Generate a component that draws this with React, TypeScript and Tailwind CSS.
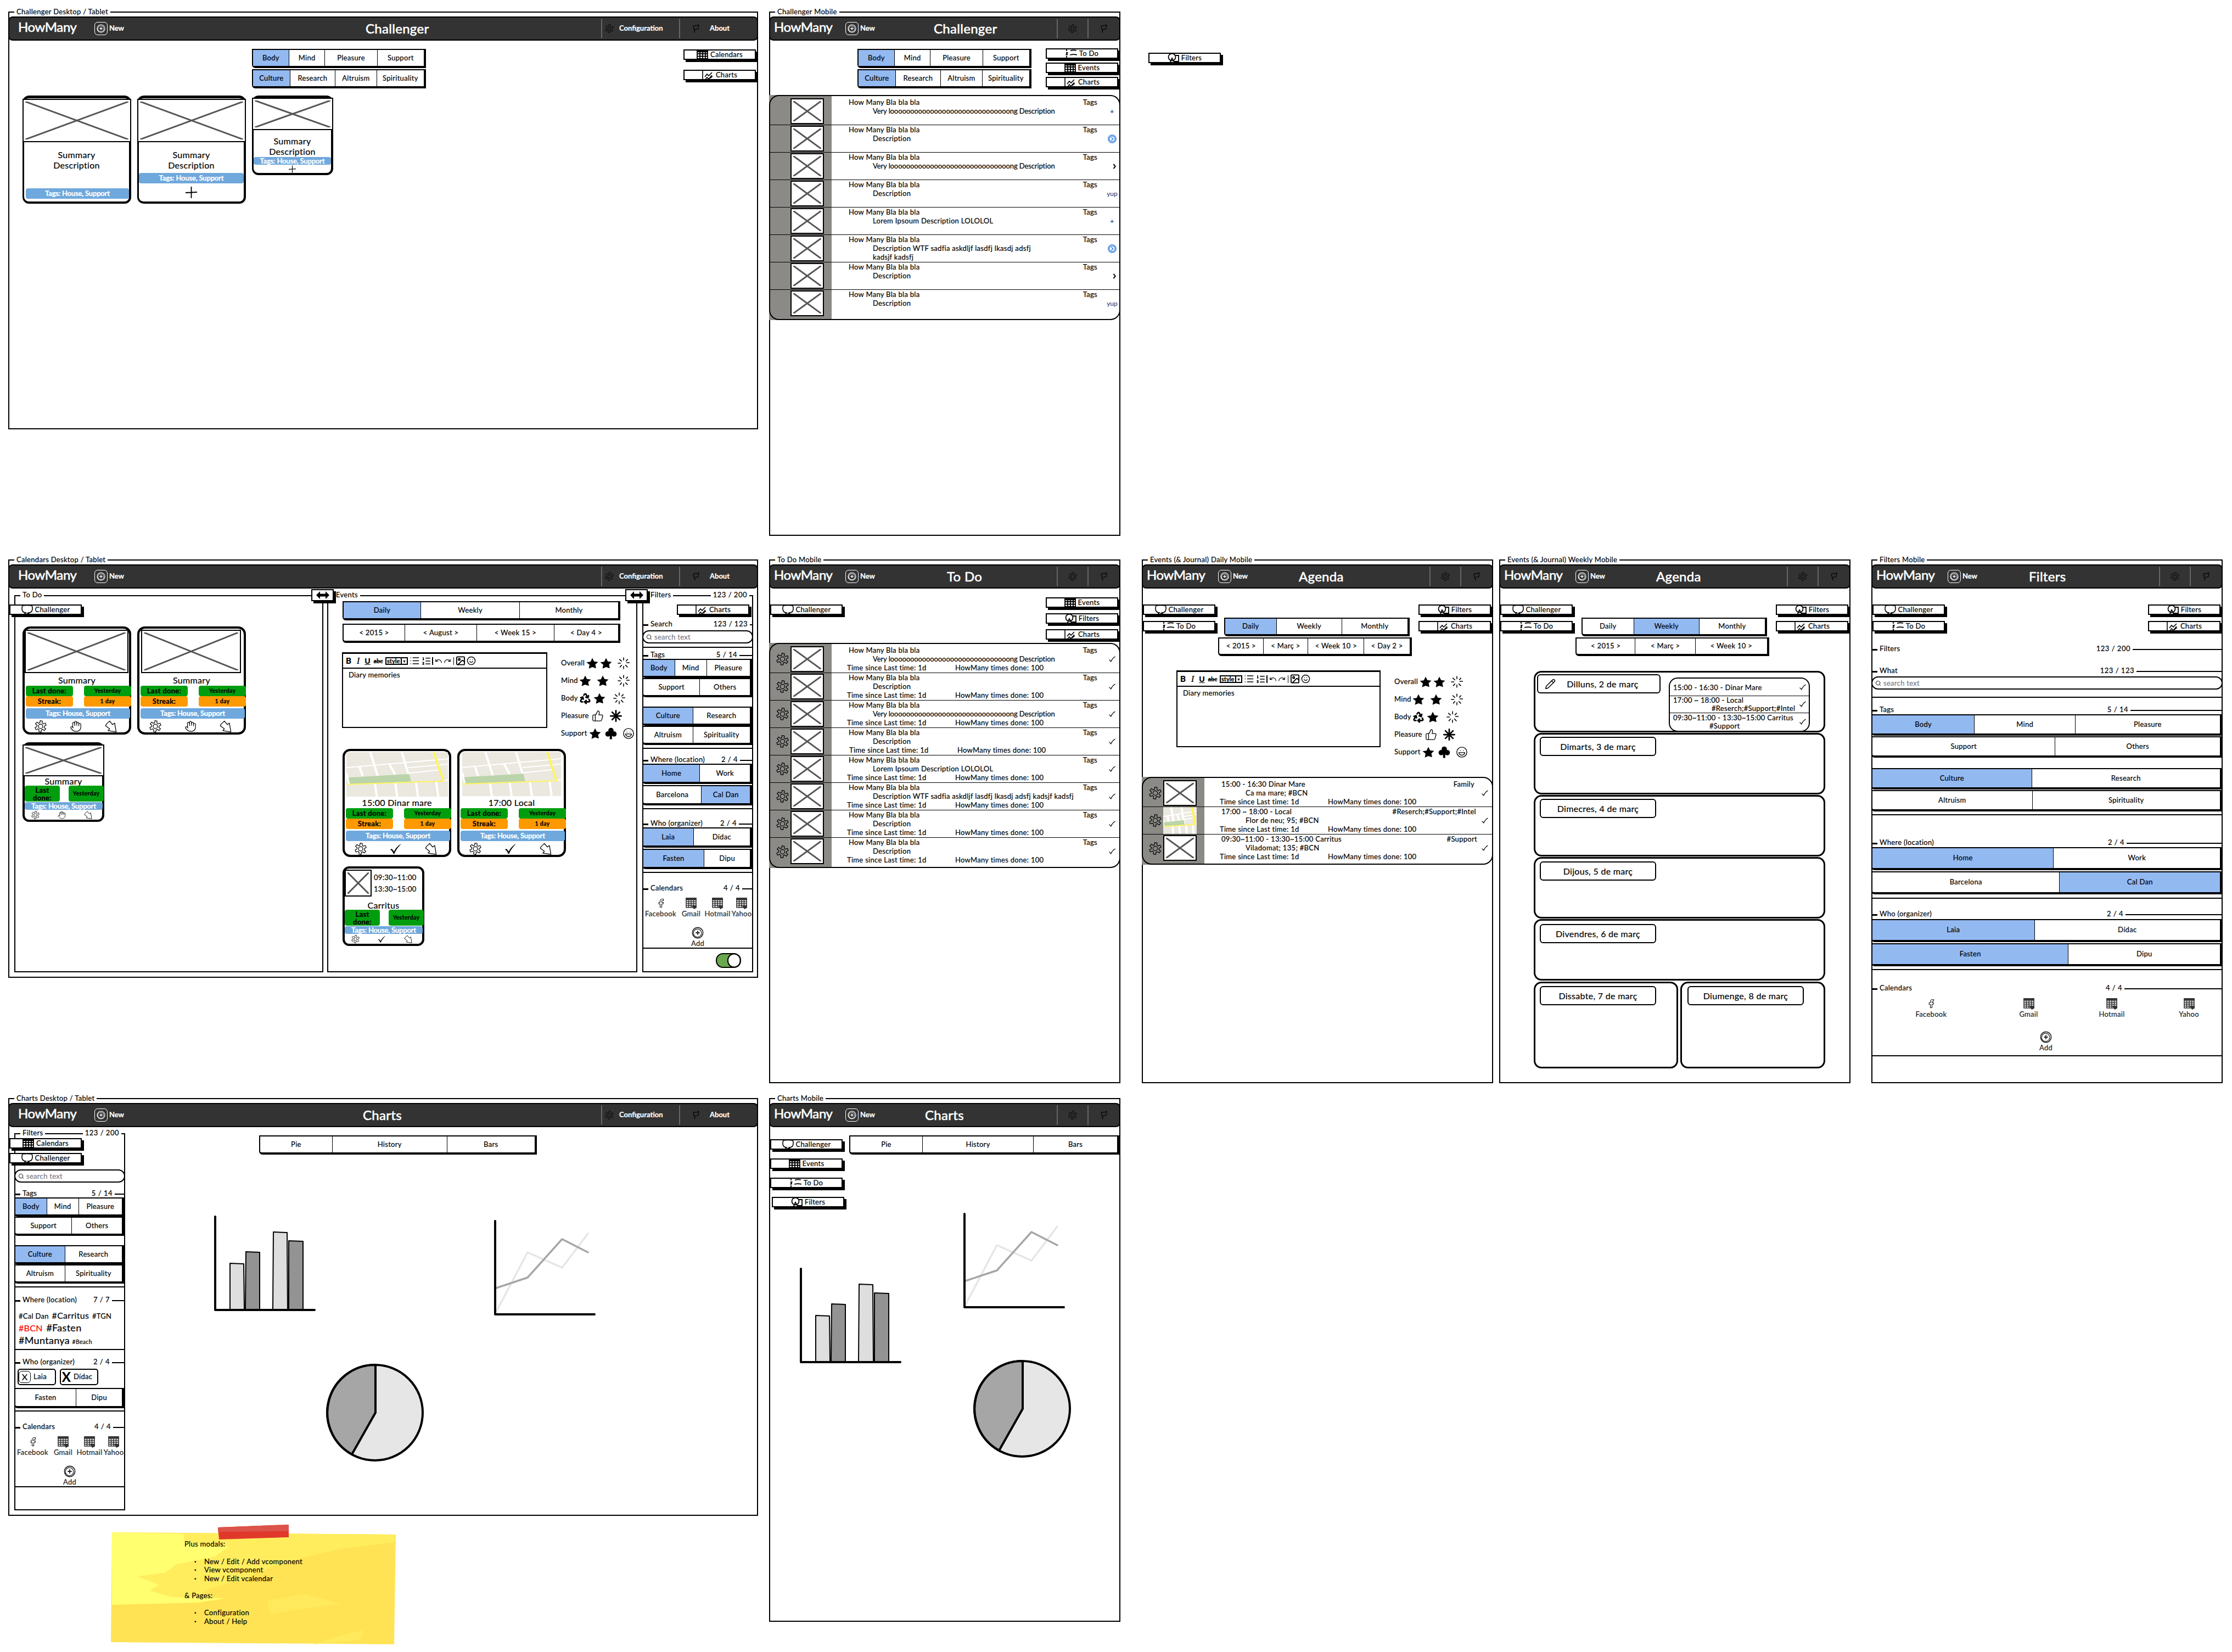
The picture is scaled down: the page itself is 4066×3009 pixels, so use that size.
import React from 'react';
import {
  Search, Hand, ThumbsUp, Recycle, Laugh, Pencil, List, ListOrdered,
  Undo, Redo, Image as ImageIcon, Smile, Facebook,
} from 'lucide-react';

type Kids = { children?: React.ReactNode; className?: string };

/* ---------- icons ---------- */

const gearPath = (() => {
  const pts: string[] = [];
  const teeth = 6;
  for (let i = 0; i < teeth; i++) {
    const a = (i / teeth) * Math.PI * 2 - 1.45;
    [[-0.34, 7.2], [-0.2, 11.4], [0.2, 11.2], [0.3, 7.6]].forEach(([d, r]) =>
      pts.push(`${(12 + Math.cos(a + d) * r).toFixed(1)} ${(12 + Math.sin(a + d) * r).toFixed(1)}`)
    );
  }
  return 'M' + pts.join('L') + 'Z';
})();

const Gear = ({ className = '' }) => (
  <svg viewBox="0 0 24 24" className={className} fill="none" stroke="#000" strokeWidth="1.300" strokeLinejoin="round">
    <path d={gearPath} />
    <circle cx="12" cy="12" r="4.300" />
  </svg>
);
const Flag = ({ className = '' }) => (
  <svg viewBox="0 0 12 16" className={className} fill="none" stroke="#000" strokeWidth="1.2" strokeLinecap="round" strokeLinejoin="round">
    <path d="M4 15L1 4C3 1 5 4 7 3S9 1 11 1.5C10 4 10.500 6 10 8.500C8 8 6 10.500 3 9.500" />
  </svg>
);
const Check = ({ className = '' }) => (
  <svg viewBox="0 0 24 24" className={className} fill="#000">
    <path d="M1 13.500L4 12L8.500 17.500C12 11 17 5 23 2C17 8 12 15 9 22L7.500 22C6 18 4 15 1 13.500Z" />
  </svg>
);
const ThinCheck = () => (
  <svg viewBox="0 0 14 14" className="h-[12px] w-[14px]" fill="none" stroke="#000" strokeWidth="1.500" strokeLinecap="round">
    <path d="M1 8L4.500 11.500C6.500 7 9.500 3.500 13 1.500" />
  </svg>
);
const FatArrow = ({ className = '' }) => (
  <svg viewBox="0 0 24 24" className={className} fill="none" stroke="#000" strokeWidth="1.400" strokeLinejoin="round">
    <path d="M9.500 1.500L15.500 8.500L19.500 5.500L22.500 23L6.500 20.500L9.500 17L1.500 11L3 7.500Z" />
  </svg>
);
const Star = ({ className = '' }) => (
  <svg viewBox="0 0 24 24" className={className} fill="#000">
    <path d="M12 1.500L15.500 8.500L23.500 9.500L18 14.500L19.500 22L12 19.500L5 22.500L6.500 15L.500 10L8.500 9Z" />
  </svg>
);
const ClubIcon = ({ className = '' }) => (
  <svg viewBox="0 0 24 24" className={className} fill="#000">
    <circle cx="12" cy="6" r="5.300" />
    <circle cx="6" cy="13" r="5.300" />
    <circle cx="18" cy="13" r="5.300" />
    <path d="M10 8H14V23.500H9.500Z" />
  </svg>
);
const Burst = ({ className = '' }) => (
  <svg viewBox="0 0 24 24" className={className} stroke="#000" strokeWidth="1.700" strokeLinecap="round">
    <path d="M12 1V6M12 18V23M1 12H6M18 11H23.500M4 4.500L8 8M17 7.500L20 4.500M8 16L5 19.500M16 16L19.500 19.500" />
  </svg>
);
const Asterisk8 = ({ className = '' }) => (
  <svg viewBox="0 0 24 24" className={className} stroke="#000" strokeWidth="3" strokeLinecap="round">
    <path d="M12 1.500V22.500M1.500 12H22.500M4.500 4.500L19.500 19.500M19.500 4.500L4.500 19.500" />
  </svg>
);
const CalGrid = ({ className = '', color = '#000' }) => (
  <svg viewBox="0 0 20 20" className={className} fill="none" stroke={color} strokeWidth="1.600">
    <path d="M1 1H19V18H1Z M1 7.500H19M1 11H19M1 14.500H19M5.500 5V18M10 5V18M14.500 5V18" />
    <path d="M1 1H19V4H1Z" fill={color} />
    <path d="M12 15H19V18L15.500 20Z" fill={color} />
  </svg>
);
const CirclePlus = ({ className = '', color = '#fff' }) => (
  <svg viewBox="0 0 24 24" className={className} fill="none" stroke={color} strokeWidth="1.800">
    <circle cx="12" cy="12" r="10.500" />
    <circle cx="11.500" cy="12.500" r="8" strokeWidth="1.300" />
    <path d="M12 8V16M8 12H16" strokeWidth="2" />
  </svg>
);
const Plus = ({ className = '' }) => (
  <svg viewBox="0 0 20 20" className={className} stroke="#000" strokeWidth="1.800" strokeLinecap="round">
    <path d="M10 .500V19.500M.500 10.500L19.500 9.500" />
  </svg>
);

type NavKind = 'cal' | 'chart' | 'todo' | 'filter' | 'chat';
const NavIcon = ({ kind }: { kind: NavKind }) => {
  const base = 'h-6 w-[21px] shrink-0';
  if (kind === 'cal')
    return (
      <svg viewBox="0 0 21 24" className={base} stroke="#000" strokeWidth="1.800" fill="none">
        <path d="M1 5H20V23H1Z M1 10H20M1 14.500H20M1 19H20M6 6V23M11 6V23M16 6V23" />
        <path d="M1 5H20V6.500H1Z" fill="#000" />
      </svg>
    );
  if (kind === 'chart')
    return (
      <svg viewBox="0 0 21 24" className={base} stroke="#000" strokeWidth="1.600" fill="none">
        <path d="M1 0V24M5 15L9 10L12 13L18 7M5 21L9 16L12 19L18 12M14 18L19 14" />
      </svg>
    );
  if (kind === 'todo')
    return (
      <svg viewBox="0 0 21 24" className={base} stroke="#000" strokeWidth="1.800" fill="none">
        <path d="M2 3V7M1 10H3.500L1.500 13.500H4M2 16V20M9 6.500Q14 4.500 20 6M8 14Q14 12.500 21 13.800" />
      </svg>
    );
  if (kind === 'filter')
    return (
      <svg viewBox="0 0 21 24" className={base} stroke="#000" strokeWidth="1.800" fill="none">
        <path d="M13 7H20V18H11" />
        <circle cx="8" cy="10" r="6.500" fill="#fff" />
        <path d="M3 23L8 12L12 19" />
      </svg>
    );
  return (
    <svg viewBox="0 0 21 24" className={base} stroke="#000" strokeWidth="1.600" fill="none">
      <path d="M2 4Q0 10 2 14Q4 17 8 17L4 21M19 4Q21.500 10 18.500 15Q15 17.500 12.500 17L15 21M2 4Q10 3 19 4M8 21Q11 16 15 21" />
    </svg>
  );
};

/* ---------- shared widgets ---------- */

const Nav = ({ kind, label, className = '' }: { kind: NavKind; label: string; className?: string }) => (
  <div className={`mb-1 mr-1 h-[19px] w-[132px] shrink-0 border-2 border-black bg-white shadow-[4px_4px_0_#000] ${className}`}>
    <div className="flex h-full items-center justify-center gap-1 overflow-hidden">
      <NavIcon kind={kind} />
      <span className="whitespace-nowrap leading-[15px]">{label}</span>
    </div>
  </div>
);

type Seg = [string, number, boolean?];
const SegBar = ({ items, className = '' }: { items: Seg[]; className?: string }) => (
  <div className={`relative z-10 flex shrink-0 rounded-bl-md border-b-[4px] border-l-2 border-r-[4px] border-t-2 border-black bg-white ${className}`}>
    {items.map(([label, w, on], i) => (
      <div
        key={label}
        className={`flex min-w-0 items-center justify-center whitespace-nowrap ${i ? 'border-l-[1.5px] border-black' : ''} ${on ? 'bg-[#93b9f1]' : ''}`}
        style={{ flex: `${w} 1 0px` }}
      >
        {label}
      </div>
    ))}
  </div>
);

const Cross = ({ className = '' }) => (
  <div className={`shrink-0 border-[2px] border-black bg-white p-[3px] ${className}`}>
    <svg viewBox="0 0 100 100" preserveAspectRatio="none" className="block h-full w-full" stroke="#555" strokeWidth="3" strokeLinecap="round">
      <path d="M0 0L100 100M100 0L0 100" vectorEffect="non-scaling-stroke" />
    </svg>
  </div>
);

const MapPic = ({ className = '' }) => (
  <svg viewBox="0 0 100 100" preserveAspectRatio="none" className={`block shrink-0 bg-[#ebe8df] ${className}`} fill="none">
    <g stroke="#fff" strokeWidth="4">
      <path vectorEffect="non-scaling-stroke" d="M23.500 0L31 54M54.500 0L63 64M13 33L16 54M42 26L48 50M0 47L3 72M28 70L30 100M48 68L50 100M68.500 68L70.500 100M88.500 67L90.500 100" />
      <path vectorEffect="non-scaling-stroke" strokeWidth="2" d="M0 35L100 15M61 35L100 27M62 47L91 40M96 65L100 62" />
    </g>
    <path d="M2 57L62 49L64 66L3.500 72Z" fill="#bbd4ab" />
    <g stroke="#fdf55c">
      <path vectorEffect="non-scaling-stroke" strokeWidth="2" d="M0 72.500L96 65" />
      <path vectorEffect="non-scaling-stroke" strokeWidth="4" d="M86 0L95.500 65" />
    </g>
  </svg>
);

const Brand = ({ cell }: { cell: string }) => (
  <>
    <span className={`${cell} -mt-[7px] shrink-0 text-[24px] leading-none tracking-[-0.4px] [-webkit-text-stroke:0.6px]`}>HowMany</span>
    <span className="flex h-6 w-6 shrink-0 items-center justify-center rounded-[6px] border-[1.5px] border-white">
      <CirclePlus className="h-[16px] w-[16px]" />
    </span>
    <span className="ml-[3px] w-[34px] shrink-0 font-bold tracking-[-0.1px]">New</span>
  </>
);
const Sep = () => <span className="h-[36px] w-[2px] shrink-0 rounded bg-[#666]" />;

const BarTitle = ({ children, className = '' }: Kids) => (
  <span className={`${className} text-[24px] leading-none [-webkit-text-stroke:0.6px]`}>{children}</span>
);

const DesktopBar = ({ title, titleClass }: { title: string; titleClass: string }) => (
  <div className="relative z-10 -mx-[3px] mt-[6px] flex h-11 shrink-0 items-center rounded-[8px] border-2 border-black bg-[#333] pl-4 text-white">
    <Brand cell="w-[139px]" />
    <BarTitle className={titleClass}>{title}</BarTitle>
    <div className="ml-auto flex w-[284px] items-center tracking-normal">
      <Sep />
      <Gear className="ml-[5px] h-4 w-4" />
      <span className="ml-[10px] w-[109px] font-bold">Configuration</span>
      <Sep />
      <Flag className="ml-[23px] h-4 w-3" />
      <span className="ml-[19px] font-bold">About</span>
    </div>
  </div>
);
const MobileBar = ({ title, titleClass }: { title: string; titleClass: string }) => (
  <div className="relative z-10 -mx-[3px] mt-[6px] flex h-11 shrink-0 items-center rounded-[8px] border-2 border-black bg-[#333] pl-[7px] text-white">
    <Brand cell="w-[130px]" />
    <BarTitle className={titleClass}>{title}</BarTitle>
    <div className="ml-auto flex w-[114px] items-center">
      <Sep />
      <Gear className="ml-[19px] mr-[19px] h-4 w-4" />
      <Sep />
      <Flag className="ml-[22px] h-4 w-3" />
    </div>
  </div>
);

const Frame = ({ title, className = '', children }: Kids & { title: string }) => (
  <section className={`relative flex shrink-0 flex-col border-2 border-black bg-white p-px ${className}`}>
    <h2 className="absolute -top-[10px] left-[9px] whitespace-nowrap bg-white px-[4px] leading-4">{title}</h2>
    {children}
  </section>
);

const Panel = ({ title, titleClass = 'left-[9px]', count, className = '', children }: Kids & { title: string; titleClass?: string; count?: string }) => (
  <div className={`relative flex h-[687px] shrink-0 flex-col border-2 border-black p-px ${className}`}>
    <span className={`absolute -top-[11px] whitespace-nowrap bg-white px-1 leading-4 ${titleClass}`}>{title}</span>
    {count && <span className="absolute -top-[11px] right-[5px] bg-white px-1 leading-4 tracking-[0.5px]">{count}</span>}
    {children}
  </div>
);

const Legend = ({ label, count, tail, className = '' }: { label: string; count: string; tail: number; className?: string }) => (
  <div className={`-mx-[2px] flex h-4 shrink-0 items-center whitespace-nowrap leading-4 ${className}`}>
    <span className="mt-[4px] h-[3px] w-[10px] bg-black" />
    <span className="ml-1">{label}</span>
    <span className="ml-auto mr-1 tracking-[0.5px]">{count}</span>
    <span className="mt-[4px] h-[2px] bg-black" style={{ width: tail }} />
  </div>
);
const Rule = ({ className = '' }) => <div className={`-mx-[3px] h-[2px] shrink-0 bg-black ${className}`} />;

const SearchBox = ({ className = '' }) => (
  <div className={`-mx-[3px] flex h-6 shrink-0 items-center rounded-full border-2 border-black bg-white pl-[5px] text-[#7a7a85] ${className}`}>
    <Search className="h-[11px] w-[11px] text-black" strokeWidth={2} />
    <span className="ml-[4px] leading-none">search text</span>
  </div>
);

const CalAccounts = ({ widths, addClass, className = '' }: { widths: string[]; addClass: string; className?: string }) => (
  <div className={`shrink-0 text-[#222] ${className}`}>
    <div className="flex">
      {['Facebook', 'Gmail', 'Hotmail', 'Yahoo'].map((n, i) => (
        <div key={n} className={`flex shrink-0 flex-col items-center ${widths[i]}`}>
          {i === 0 ? <Facebook className="h-[22px] w-[18px]" strokeWidth={1.6} /> : <CalGrid className="h-[22px] w-[20px]" color="#333" />}
          <span className="leading-4">{n}</span>
        </div>
      ))}
    </div>
    <div className={`flex w-[40px] flex-col items-center ${addClass}`}>
      <CirclePlus className="h-[22px] w-[22px]" color="#222" />
      <span className="leading-4">Add</span>
    </div>
  </div>
);

/* ---------- cards ---------- */

const Tag = ({ className = '' }) => (
  <div className={`flex shrink-0 items-center justify-center whitespace-nowrap rounded-[4px] bg-[#6fa8dc] font-bold leading-none tracking-[-0.2px] text-white ${className}`}>
    Tags: House, Support
  </div>
);

const ChallengeCard = ({ small, plus }: { small?: boolean; plus?: boolean }) => (
  <div className={`flex shrink-0 flex-col rounded-[12px] border-b-[4px] border-l-[3px] border-r-[4px] border-t-[5px] border-black bg-white ${small ? 'h-[145px] w-[148px]' : 'h-[197px] w-[198px]'}`}>
    <Cross className={small ? '-ml-[3px] -mr-1 -mt-[1px] h-[59px]' : '-ml-[3px] -mr-1 mt-[1px] h-[79px]'} />
    <div className={`text-center text-[16px] ${small ? 'mt-[10px] leading-[19px]' : 'mt-[13px] leading-[19px]'}`}>
      Summary
      <br />
      Description
    </div>
    {small ? (
      <Tag className="mt-[1px] h-[14px]" />
    ) : (
      <Tag className={plus ? 'mt-[5px] h-[19px]' : 'ml-[3px] mt-[33px] h-[19px]'} />
    )}
    {plus && <Plus className={small ? 'mx-auto mt-[1px] h-[14px] w-[13px]' : 'mx-auto mt-[6px] h-[21px] w-[21px]'} />}
  </div>
);

const Pill = ({ className = '', children }: Kids) => (
  <div className={`flex shrink-0 items-center justify-center rounded-[4px] text-center font-bold text-black ${className}`}>{children}</div>
);

const CardActions = ({ small, done }: { small?: boolean; done?: boolean }) => {
  const s = small ? 'h-[15px] w-[15px] shrink-0' : 'h-[22px] w-[22px] shrink-0';
  return (
    <div className={`flex ${small ? 'mt-[2px] gap-[33px] pl-[12px]' : 'mt-[3px] gap-[42px] pl-[18px]'}`}>
      <Gear className={s} />
      {done ? <Check className={s} /> : <Hand className={s} strokeWidth={1.3} />}
      <FatArrow className={s} />
    </div>
  );
};

const TaskCard = ({ title, picture, done }: { title: string; picture: React.ReactNode; done?: boolean }) => (
  <div className="h-[197px] w-[198px] shrink-0 rounded-[14px] border-[4px] border-black bg-white">
    <div className="mt-[2px] h-[80px]">{picture}</div>
    <div className="h-[22px] text-center text-[16px] leading-[24px]">{title}</div>
    <div className="ml-[2px] grid w-[192px] grid-cols-[86px_86px] justify-between leading-none">
      <Pill className="h-[19px] bg-[#009e0f]">Last done:</Pill>
      <Pill className="h-[19px] bg-[#009e0f] text-[10.5px]">Yesterday</Pill>
      <Pill className="h-[19px] bg-[#ff9900]">Streak:</Pill>
      <Pill className="h-[19px] bg-[#ff9900] text-[10.5px]">1 day</Pill>
    </div>
    <Tag className="ml-[2px] mt-[3px] h-[19px] w-[190px]" />
    <CardActions done={done} />
  </div>
);

const SmallTaskCard = ({ top, title, done }: { top: React.ReactNode; title: string; done?: boolean }) => (
  <div className="h-[145px] w-[149px] shrink-0 rounded-[12px] border-[4px] border-black bg-white">
    {top}
    <div className="h-[17px] text-center text-[16px] leading-[18px]">{title}</div>
    <div className="flex w-[144px] justify-between">
      <Pill className="h-[29px] w-[64px] bg-[#009e0f] leading-[14px]">
        Last
        <br />
        done:
      </Pill>
      <Pill className="h-[29px] w-[64px] bg-[#009e0f] text-[10.5px]">Yesterday</Pill>
    </div>
    <Tag className="mt-[1px] h-[14px] w-[142px]" />
    <CardActions small done={done} />
  </div>
);

/* ---------- editor & ratings ---------- */

const Editor = ({ className = '' }) => (
  <div className={`flex shrink-0 flex-col border-2 border-black bg-white ${className}`}>
    <div className="flex h-[28px] shrink-0 items-center border-b-2 border-t border-black pl-[5px] tracking-normal">
      <span className="w-[14px] text-[15px] font-black leading-none">B</span>
      <span className="w-[17px] text-center font-['Liberation_Serif'] text-[17px] italic leading-none">I</span>
      <span className="w-[17px] text-center text-[14px] font-black leading-none underline">U</span>
      <span className="w-[22px] text-center text-[11px] font-bold leading-none line-through">abc</span>
      <span className="ml-[2px] flex h-[14px] w-[41px] items-center border-2 border-black pl-[1px] text-[11px] font-bold leading-none">
        style
        <span className="ml-auto h-full w-[11px] border-l-2 border-black text-center text-[7px] leading-[10px]">▼</span>
      </span>
      <List className="ml-[3px] h-[19px] w-[19px]" strokeWidth={2} />
      <ListOrdered className="ml-[2px] h-[18px] w-[19px]" strokeWidth={2} />
      <span className="ml-[1px] h-[14px] w-[2px] bg-black" />
      <Undo className="ml-[3px] h-[14px] w-[14px]" strokeWidth={2} />
      <Redo className="ml-[2px] h-[14px] w-[14px]" strokeWidth={2} />
      <span className="ml-[4px] h-[14px] w-[1px] bg-black" />
      <ImageIcon className="ml-[2px] h-[19px] w-[20px]" strokeWidth={2.4} />
      <Smile className="ml-[1px] h-[17px] w-[17px]" strokeWidth={2} />
    </div>
    <div className="pl-[10px] pt-[3px] leading-4">Diary memories</div>
  </div>
);

const ic = 'h-[22px] w-[22px] shrink-0';
const Ratings = ({ className = '' }) => (
  <div className={`flex shrink-0 flex-col ${className}`}>
    <div className="flex h-8 items-center">
      <span className="w-[46px]">Overall</span>
      <Star className={ic} />
      <Star className={`${ic} ml-[3px]`} />
      <Burst className={`${ic} ml-[10px]`} />
    </div>
    <div className="flex h-8 items-center">
      <span className="w-[33px]">Mind</span>
      <Star className={ic} />
      <Star className={`${ic} ml-[10px]`} />
      <Burst className={`${ic} ml-[16px]`} />
    </div>
    <div className="flex h-8 items-center">
      <span className="w-[33px]">Body</span>
      <Recycle className={ic} strokeWidth={3} />
      <Star className={`${ic} ml-[4px]`} />
      <Burst className={`${ic} ml-[14px]`} />
    </div>
    <div className="flex h-8 items-center">
      <span className="w-[56px]">Pleasure</span>
      <ThumbsUp className={ic} strokeWidth={1.4} />
      <Asterisk8 className={`${ic} ml-[11px]`} />
    </div>
    <div className="flex h-8 items-center">
      <span className="w-[51px]">Support</span>
      <Star className={ic} />
      <ClubIcon className={`${ic} ml-[7px]`} />
      <Laugh className={`${ic} ml-[10px]`} strokeWidth={1.5} />
    </div>
  </div>
);

/* ---------- lists ---------- */

type Row = {
  title: string;
  lines: string[];
  tight?: boolean;
  tag?: string;
  tagClass?: string;
  action?: 'plus' | 'circle' | 'chevron' | 'yup';
  map?: boolean;
  shift?: boolean;
};

const ActionMark = ({ action }: { action?: Row['action'] }) => {
  if (action === 'plus') return <span className="text-[12px] font-bold text-[#2f4f8f]">+</span>;
  if (action === 'yup') return <span className="text-[12px] tracking-normal text-[#2f4f8f]">yup</span>;
  if (action === 'circle')
    return (
      <svg viewBox="0 0 16 16" className="h-4 w-4" fill="none" stroke="#2a78dc" strokeWidth="1.300">
        <circle cx="8" cy="8" r="7.200" />
        <circle cx="8" cy="8" r="5.200" />
        <path d="M6.500 5L9.500 8L6.500 11" strokeWidth="1.600" />
      </svg>
    );
  if (action === 'chevron')
    return (
      <svg viewBox="0 0 8 12" className="ml-[8px] h-[10px] w-[7px]" fill="none" stroke="#000" strokeWidth="2.400">
        <path d="M1.500 1L5.500 6L1.500 11" />
      </svg>
    );
  return <ThinCheck />;
};

const TaskList = ({ rows, stats, className = '' }: { rows: Row[]; stats?: boolean; className?: string }) => (
  <div className={`relative -mx-[3px] shrink-0 ${className}`}>
    <div className="absolute inset-y-0 left-0 w-[114px] bg-[#8b8a87]" />
    <div className="relative rounded-[18px] border-2 border-black py-[3px]">
      {rows.map((r, i) => (
        <div key={i} className={`flex h-[50px] border-black ${i < rows.length - 1 ? 'border-b-[1.5px]' : ''}`}>
          <div className="flex w-[37px] shrink-0 items-center pl-[11px]">{stats && <Gear className="h-[23px] w-[23px]" />}</div>
          {r.map ? <MapPic className="h-[49px] w-[61px]" /> : <Cross className="mt-[1px] h-[47px] w-[61px]" />}
          <div className="ml-[42px] w-[470px] shrink-0 whitespace-nowrap leading-4">
            <div className={`flex justify-between pl-[3px] ${r.tagClass ?? 'pr-[14px]'}`}>
              <span>{r.title}</span>
              <span>{r.tag ?? 'Tags'}</span>
            </div>
            {r.lines.map((l) => (
              <div key={l} className={`pl-[47px] ${r.tight ? 'tracking-[-0.1px]' : ''}`}>{l}</div>
            ))}
            {stats && (
              <div className={`flex ${r.shift ? 'pl-1' : ''}`}>
                <span className="w-[197px]">Time since Last time: 1d</span>
                <span>HowMany times done: 100</span>
              </div>
            )}
          </div>
          <div className="flex w-[26px] shrink-0 items-center justify-center">
            <ActionMark action={r.action} />
          </div>
        </div>
      ))}
    </div>
  </div>
);

const LONG = 'Very loooooooooooooooooooooooooooooong Description';
const BLA = 'How Many Bla bla bla';
const challengeRows: Row[] = [
  { title: BLA, lines: [LONG], tight: true, action: 'plus' },
  { title: BLA, lines: ['Description'], action: 'circle' },
  { title: BLA, lines: [LONG], tight: true, action: 'chevron' },
  { title: BLA, lines: ['Description'], action: 'yup' },
  { title: BLA, lines: ['Lorem Ipsoum Description LOLOLOL'], action: 'plus' },
  { title: BLA, lines: ['Description WTF sadfia askdljf lasdfj lkasdj adsfj', 'kadsjf kadsfj'], action: 'circle' },
  { title: BLA, lines: ['Description'], action: 'chevron' },
  { title: BLA, lines: ['Description'], action: 'yup' },
];
const todoRows: Row[] = [
  { title: BLA, lines: [LONG], tight: true },
  { title: BLA, lines: ['Description'] },
  { title: BLA, lines: [LONG], tight: true },
  { title: BLA, lines: ['Description'], shift: true },
  { title: BLA, lines: ['Lorem Ipsoum Description LOLOLOL'] },
  { title: BLA, lines: ['Description WTF sadfia askdljf lasdfj lkasdj adsfj kadsjf kadsfj'] },
  { title: BLA, lines: ['Description'] },
  { title: BLA, lines: ['Description'] },
];
const agendaRows: Row[] = [
  { title: '15:00 - 16:30 Dinar Mare', lines: ['Ca ma mare; #BCN'], tag: 'Family', tagClass: 'pr-[6px]' },
  { title: '17:00 ~ 18:00 - Local', lines: ['Flor de neu; 95; #BCN'], tag: '#Reserch;#Support;#Intel', tagClass: 'pr-[3px]', map: true },
  { title: '09:30~11:00 - 13:30~15:00 Carritus', lines: ['Viladomat; 135; #BCN'], tag: '#Support', tagClass: 'pr-[1px]' },
];

/* ---------- charts ---------- */

const BarChart = ({ className = '' }) => (
  <svg viewBox="0 0 188 176" className={`h-[176px] w-[188px] shrink-0 ${className}`} stroke="#000" strokeWidth="2" strokeLinejoin="round">
    <path d="M30 172V88L55 89L56 172Z" fill="#dedede" />
    <path d="M58 172L59 67L84 68L84 172Z" fill="#939393" />
    <path d="M108 172L109 31L134 32L135 172Z" fill="#dedede" />
    <path d="M137 172V47L163 48L163 172Z" fill="#939393" />
    <path d="M3 3V173H184" fill="none" strokeWidth="4" strokeLinecap="round" />
  </svg>
);
const LineChart = ({ className = '' }) => (
  <svg viewBox="0 0 188 176" className={`h-[176px] w-[188px] shrink-0 ${className}`} fill="none" strokeLinecap="round" strokeLinejoin="round" strokeWidth="3.500">
    <path d="M5 168L62 60L125 88L172 26" stroke="#e6e6e6" />
    <path d="M5 125L62 106L125 36L172 60" stroke="#a6a6a6" />
    <path d="M3 3V173H184" stroke="#000" strokeWidth="4" />
  </svg>
);
const PieChart = ({ className = '' }) => (
  <svg viewBox="0 0 180 180" className={`h-[180px] w-[180px] shrink-0 ${className}`} stroke="#000" strokeWidth="4" strokeLinejoin="round">
    <circle cx="89" cy="90" r="87" fill="#e6e6e6" />
    <path d="M90 90V3A87 87 0 0 0 47 166Z" fill="#a6a6a6" />
  </svg>
);

/* ---------- filter groups ---------- */

const TagBars = ({ wide }: { wide?: boolean }) => {
  const h = wide ? 'h-[39px] -ml-[3px] -mr-[2px]' : 'h-[35px] -ml-[3px] -mr-[1px]';
  return (
    <>
      <SegBar className={`${h} ${wide ? 'mt-[1px]' : ''}`} items={wide ? [['Body', 186, true], ['Mind', 183], ['Pleasure', 264]] : [['Body', 58, true], ['Mind', 58], ['Pleasure', 80]]} />
      <SegBar className={`${h} ${wide ? 'mt-[1px]' : ''}`} items={wide ? [['Support', 333], ['Others', 300]] : [['Support', 104], ['Others', 92]]} />
      <SegBar className={`${h} ${wide ? 'mt-[19px]' : 'mt-[17px]'}`} items={wide ? [['Culture', 290, true], ['Research', 343]] : [['Culture', 91, true], ['Research', 105]]} />
      <SegBar className={`${h} ${wide ? 'mt-[1px]' : ''}`} items={wide ? [['Altruism', 291], ['Spirituality', 342]] : [['Altruism', 91], ['Spirituality', 105]]} />
      <Rule className="mt-[5px]" />
    </>
  );
};

const ArrowToggle = () => (
  <div className="absolute -right-[21px] -top-[13px] z-20 flex h-[22px] w-[41px] items-center justify-center border-2 border-black bg-white shadow-[4px_4px_0_#000]">
    <svg viewBox="0 0 24 14" className="h-[14px] w-[24px]" fill="#000">
      <path d="M0 7L7 0V4.500H17V0L24 7L17 14V9.500H7V14Z" />
    </svg>
  </div>
);

const topTags1: Seg[] = [['Body', 66, true], ['Mind', 66], ['Pleasure', 96], ['Support', 86]];
const topTags2: Seg[] = [['Culture', 68, true], ['Research', 83], ['Altruism', 76], ['Spirituality', 87]];

const Day = ({ label, pencil, className = '', boxClass = 'ml-[8px] mt-[4px] w-[212px]', children }: Kids & { label: string; pencil?: boolean; boxClass?: string }) => (
  <div className={`flex shrink-0 items-start rounded-[14px] border-[3px] border-black bg-white ${className}`}>
    <div className={`flex h-[35px] shrink-0 items-center justify-center rounded-[6px] border-2 border-black text-[16px] leading-none ${boxClass}`}>
      {pencil && <Pencil className="mr-5 h-[20px] w-[20px]" strokeWidth={1.8} />}
      <span className={pencil ? 'mr-[26px]' : ''}>{label}</span>
    </div>
    {children}
  </div>
);

const Note = () => (
  <div className="relative ml-[187px] mt-[30px] h-[204px] w-[519px] shrink-0">
    <svg viewBox="0 0 519 204" className="absolute inset-0 h-full w-full">
      <path d="M2 0L260 2L519 4L516 204L0 200Z" fill="#ffe354" />
      <path d="M2 0L519 4L517 18L420 30L350 46L300 60L240 85L180 103L140 128L2 132Z" fill="#ffed5e" />
      <path d="M2 0L132 3L134 18L215 26L190 44L120 58L98 74L48 80L88 96L70 106L110 118L210 120L160 128L2 132Z" fill="#ffff70" />
      <path d="M285 125L350 112L420 130L340 140L290 150ZM410 190L460 178L455 196L370 204Z" fill="#ffe95c" />
    </svg>
    <svg viewBox="0 0 130 28" className="absolute -top-[15px] left-[195px] h-7 w-[130px]">
      <path d="M0 6L129 1V24L2 28Z" fill="#e1382c" />
      <path d="M0 6L129 1V13L0 14Z" fill="#dc5349" />
    </svg>
    <div className="relative pl-[134px] pt-[14px] leading-[15.65px]">
      <p>Plus modals:</p>
      <ul className="mt-4">
        {['New / Edit / Add vcomponent', 'View vcomponent', 'New / Edit vcalendar'].map((t) => (
          <li key={t} className="flex">
            <span className="w-[36px] pl-[18px] font-bold">·</span>
            {t}
          </li>
        ))}
      </ul>
      <p className="mt-[15px]">&amp; Pages:</p>
      <ul className="mt-4">
        {['Configuration', 'About / Help'].map((t) => (
          <li key={t} className="flex">
            <span className="w-[36px] pl-[18px] font-bold">·</span>
            {t}
          </li>
        ))}
      </ul>
    </div>
  </div>
);

/* ---------- frames ---------- */

const ChallengerDesktop = () => (
  <Frame title="Challenger Desktop / Tablet" className="h-[761px] w-[1366px]">
    <DesktopBar title="Challenger" titleClass="ml-[433px]" />
    <div className="flex justify-between">
      <div className="ml-[441px] mt-[15px] flex w-[317px] flex-col gap-[2px]">
        <SegBar className="h-[35px]" items={topTags1} />
        <SegBar className="h-[35px]" items={topTags2} />
      </div>
      <div className="-mr-[3px] mt-[16px] flex flex-col gap-[14px]">
        <Nav kind="cal" label="Calendars" />
        <Nav kind="chart" label="Charts" />
      </div>
    </div>
    <div className="ml-[23px] mt-[13px] flex items-start gap-[11px]">
      <ChallengeCard />
      <ChallengeCard plus />
      <ChallengeCard small plus />
    </div>
  </Frame>
);

const ChallengerMobile = () => (
  <Frame title="Challenger Mobile" className="ml-5 h-[955px] w-[640px]">
    <MobileBar title="Challenger" titleClass="ml-[100px]" />
    <div className="flex justify-between">
      <div className="ml-[158px] mt-[15px] flex w-[317px] flex-col gap-[2px]">
        <SegBar className="h-[35px]" items={topTags1} />
        <SegBar className="h-[35px]" items={topTags2} />
      </div>
      <div className="-mr-[3px] mt-[14px] flex flex-col gap-[3px]">
        <Nav kind="todo" label="To Do" />
        <Nav kind="cal" label="Events" />
        <Nav kind="chart" label="Charts" />
      </div>
    </div>
    <TaskList className="mt-[10px]" rows={challengeRows} />
  </Frame>
);

const CalendarsDesktop = () => (
  <Frame title="Calendars Desktop / Tablet" className="h-[762px] w-[1366px]">
    <DesktopBar title="" titleClass="" />
    <div className="ml-[8px] mt-[12px] flex">
      <Panel title="To Do" className="w-[563px]">
        <ArrowToggle />
        <Nav kind="chat" label="Challenger" className="relative -ml-[12px] mt-[14px]" />
        <div className="ml-[12px] mt-[17px] flex gap-[11px]">
          <TaskCard title="Summary" picture={<Cross className="h-[79px] w-[189px]" />} />
          <TaskCard title="Summary" picture={<Cross className="ml-[3px] h-[79px] w-[182px]" />} />
        </div>
        <div className="ml-[12px] mt-[14px]">
          <SmallTaskCard title="Summary" top={<Cross className="-mx-1 h-[58px]" />} />
        </div>
      </Panel>
      <Panel title="Events" titleClass="left-[10px]" className="ml-[7px] w-[565px]">
        <ArrowToggle />
        <div className="ml-[25px] w-[506px]">
          <SegBar className="mt-[8px] h-[35px]" items={[['Daily', 141, true], ['Weekly', 180], ['Monthly', 180]]} />
          <SegBar className="mt-[6px] h-[35px]" items={[['< 2015 >', 112], ['< August >', 131], ['< Week 15 >', 141], ['< Day 4 >', 117]]} />
        </div>
        <div className="ml-[24px] mt-[17px] flex h-[164px] items-start">
          <Editor className="h-[138px] w-[374px]" />
          <Ratings className="ml-[25px] mt-[4px]" />
        </div>
        <div className="ml-[25px] mt-[12px] flex gap-[11px]">
          <TaskCard done title="15:00 Dinar mare" picture={<MapPic className="ml-[3px] h-[81px] w-[185px]" />} />
          <TaskCard done title="17:00 Local" picture={<MapPic className="ml-[5px] h-[80px] w-[180px]" />} />
        </div>
        <div className="ml-[25px] mt-[17px]">
          <SmallTaskCard
            done
            title="Carritus"
            top={
              <div className="flex h-[58px] items-start pt-[2px]">
                <Cross className="h-[49px] w-[49px]" />
                <div className="ml-[4px] pt-[4px] leading-[21px]">
                  09:30~11:00
                  <br />
                  13:30~15:00
                </div>
              </div>
            }
          />
        </div>
      </Panel>
      <Panel title="Filters" count="123 / 200" className="ml-[9px] w-[202px]">
        <Nav kind="chart" label="Charts" className="relative -mr-[8px] ml-auto mt-[14px]" />
        <Legend label="Search" count="123 / 123" tail={5} className="mt-[4px]" />
        <SearchBox className="mt-[4px]" />
        <Rule className="mt-[6px]" />
        <Legend label="Tags" count="5 / 14" tail={24} className="mt-[4px]" />
        <TagBars />
        <Legend label="Where (location)" count="2 / 4" tail={23} className="mt-[11px]" />
        <SegBar className="-ml-[3px] -mr-[1px] h-[37px]" items={[['Home', 104, true], ['Work', 92]]} />
        <SegBar className="-ml-[3px] -mr-[1px] mt-[2px] h-[37px]" items={[['Barcelona', 107], ['Cal Dan', 89, true]]} />
        <Rule className="mt-[5px]" />
        <Legend label="Who (organizer)" count="2 / 4" tail={25} className="mt-[17px]" />
        <SegBar className="-ml-[3px] -mr-[1px] h-[37px]" items={[['Laia', 92, true], ['Dídac', 104]]} />
        <SegBar className="-ml-[3px] -mr-[1px] mt-[2px] h-[37px]" items={[['Fasten', 112, true], ['Dipu', 84]]} />
        <Rule className="mt-[5px]" />
        <Legend label="Calendars" count="4 / 4" tail={19} className="mt-[19px]" />
        <CalAccounts className="mt-[9px]" widths={['w-[61px]', 'w-[50px]', 'w-[46px]', 'w-[42px]']} addClass="ml-[78px] mt-4" />
        <Rule />
        <svg viewBox="0 0 46 27" className="ml-[131px] mt-[8px] h-[27px] w-[46px] shrink-0" stroke="#000" strokeWidth="2">
          <rect x="1" y="1" width="44" height="25" rx="12" fill="#6aa84f" />
          <rect x="22" y="1.500" width="22.500" height="24" rx="11" fill="#fff" />
        </svg>
      </Panel>
    </div>
  </Frame>
);

const TodoMobile = () => (
  <Frame title="To Do Mobile" className="ml-5 h-[954px] w-[640px]">
    <MobileBar title="To Do" titleClass="ml-[124px]" />
    <div className="flex justify-between">
      <Nav kind="chat" label="Challenger" className="-ml-[1px] mt-[29px]" />
      <div className="-mr-[3px] mt-[16px] flex flex-col gap-[6px]">
        <Nav kind="cal" label="Events" />
        <Nav kind="filter" label="Filters" />
        <Nav kind="chart" label="Charts" />
      </div>
    </div>
    <TaskList stats className="mt-[2px]" rows={todoRows} />
  </Frame>
);

const SideNavs = ({ children }: Kids) => (
  <div className="flex justify-between">
    <div className="-ml-[1px] mt-[29px] flex w-[134px] flex-col gap-[7px]">
      <Nav kind="chat" label="Challenger" />
      <Nav kind="todo" label="To Do" />
    </div>
    {children}
    <div className="-mr-[3px] mt-[29px] flex w-[136px] flex-col gap-[7px]">
      <Nav kind="filter" label="Filters" />
      <Nav kind="chart" label="Charts" />
    </div>
  </div>
);

const DailyMobile = () => (
  <Frame title="Events (& Journal) Daily Mobile" className="ml-[39px] h-[954px] w-[640px]">
    <MobileBar title="Agenda" titleClass="ml-[86px]" />
    <SideNavs>
      <div className="mr-[9px] mt-[53px] flex w-[353px] flex-col gap-[2px]">
        <SegBar className="ml-[11px] h-[34px] w-[338px]" items={[['Daily', 94, true], ['Weekly', 120], ['Monthly', 121]]} />
        <SegBar className="h-[34px]" items={[['< 2015 >', 81], ['< Març >', 82], ['< Week 10 >', 103], ['< Day 2 >', 84]]} />
      </div>
    </SideNavs>
    <div className="ml-[60px] mt-[26px] flex h-[165px] items-start">
      <Editor className="h-[140px] w-[372px]" />
      <Ratings className="ml-[25px] mt-[5px]" />
    </div>
    <TaskList stats className="mt-[29px]" rows={agendaRows} />
  </Frame>
);

const WeeklyMobile = () => (
  <Frame title="Events (& Journal) Weekly Mobile" className="ml-[11px] h-[954px] w-[640px]">
    <MobileBar title="Agenda" titleClass="ml-[86px]" />
    <SideNavs>
      <div className="mr-[9px] mt-[53px] flex w-[353px] flex-col gap-[2px]">
        <SegBar className="ml-[11px] h-[34px] w-[338px]" items={[['Daily', 94], ['Weekly', 120, true], ['Monthly', 121]]} />
        <SegBar className="h-[34px]" items={[['< 2015 >', 108], ['< Març >', 110], ['< Week 10 >', 132]]} />
      </div>
    </SideNavs>
    <div className="ml-[60px] mt-[27px] flex w-[531px] flex-col gap-[1px]">
      <Day label="Dilluns, 2 de març" pencil boxClass="ml-[3px] mt-[3px] w-[225px]" className="h-[112px]">
        <div className="ml-[15px] mt-[9px] h-[99px] w-[257px] rounded-[16px] border-2 border-black leading-4">
          <div className="flex h-[32px] items-center justify-between border-b-[1.5px] border-black pl-[6px] pr-[4px]">
            15:00 - 16:30 - Dinar Mare
            <ThinCheck />
          </div>
          <div className="flex h-[31px] items-center justify-between whitespace-nowrap border-b-[1.5px] border-black pl-[6px] pr-[4px] leading-[15px]">
            <div>
              17:00 ~ 18:00 - Local
              <div className="pl-[70px]">#Reserch;#Support;#Intel</div>
            </div>
            <ThinCheck />
          </div>
          <div className="flex h-[31px] items-center justify-between whitespace-nowrap pl-[6px] pr-[4px] leading-[15px]">
            <div>
              09:30~11:00 - 13:30~15:00 Carritus
              <div className="pl-[66px]">#Support</div>
            </div>
            <ThinCheck />
          </div>
        </div>
      </Day>
      <Day label="Dimarts, 3 de març" className="h-[112px]" />
      <Day label="Dimecres, 4 de març" className="h-[112px]" />
      <Day label="Dijous, 5 de març" className="h-[112px]" boxClass="ml-[8px] mt-[5px] w-[212px]" />
      <Day label="Divendres, 6 de març" className="h-[112px]" boxClass="ml-[8px] mt-[6px] w-[212px]" />
      <div className="mt-[1px] flex justify-between">
        <Day label="Dissabte, 7 de març" className="h-[158px] w-[263px]" boxClass="ml-[8px] mt-[5px] w-[212px]" />
        <Day label="Diumenge, 8 de març" className="h-[158px] w-[264px]" boxClass="ml-[10px] mt-[5px] w-[212px]" />
      </div>
    </div>
  </Frame>
);

const FiltersMobile = () => (
  <Frame title="Filters Mobile" className="ml-[38px] h-[954px] w-[640px]">
    <MobileBar title="Filters" titleClass="ml-[87px]" />
    <SideNavs />
    <Legend label="Filters" count="123 / 200" tail={163} className="mt-[19px]" />
    <Legend label="What" count="123 / 123" tail={156} className="mt-[24px]" />
    <SearchBox className="mt-[3px]" />
    <Rule className="mt-[13px]" />
    <Legend label="Tags" count="5 / 14" tail={167} className="mt-[13px]" />
    <TagBars wide />
    <Legend label="Where (location)" count="2 / 4" tail={174} className="mt-[41px]" />
    <SegBar className="-ml-[3px] -mr-[2px] mt-[1px] h-[42px]" items={[['Home', 330, true], ['Work', 303]]} />
    <SegBar className="-ml-[3px] -mr-[2px] mt-[2px] h-[42px]" items={[['Barcelona', 341], ['Cal Dan', 292, true]]} />
    <Rule className="mt-[6px]" />
    <Legend label="Who (organizer)" count="2 / 4" tail={176} className="mt-[19px]" />
    <SegBar className="-ml-[3px] -mr-[2px] mt-[2px] h-[42px]" items={[['Laia', 295, true], ['Dídac', 338]]} />
    <SegBar className="-ml-[3px] -mr-[2px] mt-[2px] h-[42px]" items={[['Fasten', 357, true], ['Dipu', 276]]} />
    <Rule className="mt-[5px]" />
    <Legend label="Calendars" count="4 / 4" tail={178} className="mt-[24px]" />
    <CalAccounts className="mt-[10px]" widths={['w-[212px]', 'w-[143px]', 'w-[160px]', 'w-[121px]']} addClass="ml-[295px] mt-[23px]" />
    <Rule className="mt-[6px]" />
  </Frame>
);

const ChartsDesktop = () => (
  <Frame title="Charts Desktop / Tablet" className="h-[761px] w-[1366px]">
    <DesktopBar title="Charts" titleClass="ml-[428px]" />
    <div className="flex">
      <Panel title="Filters" count="123 / 200" className="ml-[8px] mt-[11px] w-[202px]">
        <Nav kind="cal" label="Calendars" className="relative -ml-[12px] mt-[6px]" />
        <Nav kind="chat" label="Challenger" className="relative -ml-[12px] mt-[4px]" />
        <SearchBox className="mt-[7px]" />
        <Legend label="Tags" count="5 / 14" tail={18} className="mt-[11px]" />
        <TagBars />
        <Legend label="Where (location)" count="7 / 7" tail={23} className="mt-[14px]" />
        <div className="mt-[9px] h-[73px] whitespace-nowrap pl-[5px] leading-[23px]">
          <div className="h-[23px]">
            #Cal Dan <span className="ml-[2px] text-[16px]">#Carritus</span> <span className="ml-[2px]">#TGN</span>
          </div>
          <div className="h-[23px]">
            <span className="text-[16px] text-[#f00]">#BCN</span> <span className="ml-[3px] text-[18px]">#Fasten</span>
          </div>
          <div className="h-[23px]">
            <span className="text-[18px]">#Muntanya</span> <span className="ml-[1px] text-[10.5px]">#Beach</span>
          </div>
        </div>
        <Rule />
        <Legend label="Who (organizer)" count="2 / 4" tail={23} className="mt-[13px]" />
        <div className="ml-[3px] mt-[5px] flex gap-[7px]">
          <div className="flex h-[30px] w-[70px] items-center rounded-[5px] border-2 border-black">
            <span className="flex h-[22px] w-[22px] items-center justify-center rounded-[6px] border border-black text-[16px] leading-none">X</span>
            <span className="ml-[5px]">Laia</span>
          </div>
          <div className="flex h-[30px] w-[70px] items-center rounded-[5px] border-2 border-black">
            <span className="flex h-[22px] w-[20px] items-center justify-center text-[24px] font-bold leading-none">X</span>
            <span className="ml-[3px]">Dídac</span>
          </div>
        </div>
        <SegBar className="-ml-[3px] -mr-[1px] mt-[5px] h-[37px]" items={[['Fasten', 112], ['Dipu', 84]]} />
        <Rule className="mt-[4px]" />
        <Legend label="Calendars" count="4 / 4" tail={21} className="mt-[19px]" />
        <CalAccounts className="mt-[9px]" widths={['w-[61px]', 'w-[50px]', 'w-[46px]', 'w-[42px]']} addClass="ml-[78px] mt-4" />
        <Rule />
      </Panel>
      <div className="flex flex-col">
        <SegBar className="ml-[244px] mt-[15px] h-[35px] w-[506px]" items={[['Pie', 133], ['History', 211], ['Bars', 162]]} />
        <div className="ml-[161px] mt-[110px] flex h-[182px] gap-[322px]">
          <BarChart />
          <LineChart className="mt-[8px]" />
        </div>
        <PieChart className="ml-[366px] mt-[88px]" />
      </div>
    </div>
  </Frame>
);

const ChartsMobile = () => (
  <Frame title="Charts Mobile" className="ml-5 h-[954px] w-[640px]">
    <MobileBar title="Charts" titleClass="ml-[84px]" />
    <div className="flex h-[150px] items-start">
      <div className="-ml-[1px] mt-[22px] flex flex-col gap-[12px]">
        <Nav kind="chat" label="Challenger" />
        <Nav kind="cal" label="Events" />
        <Nav kind="todo" label="To Do" />
        <Nav kind="filter" label="Filters" className="ml-[3px]" />
      </div>
      <SegBar className="ml-[5px] mt-[15px] h-[35px] w-[492px]" items={[['Pie', 132], ['History', 203], ['Bars', 153]]} />
    </div>
    <div className="flex items-start">
      <BarChart className="ml-[52px] mt-[105px]" />
      <div className="ml-[110px] mt-[5px] flex flex-col">
        <LineChart />
        <PieChart className="ml-[19px] mt-[92px]" />
      </div>
    </div>
  </Frame>
);

export default function App() {
  return (
    <main className="h-[3009px] w-[4066px] overflow-hidden bg-white pl-[15px] pt-[21px] font-['Lato',sans-serif] text-[13px] tracking-[0.3px] text-black [-webkit-text-stroke:0.2px]">
      <div className="flex h-[998px] items-start">
        <ChallengerDesktop />
        <ChallengerMobile />
        <Nav kind="filter" label="Filters" className="ml-[51px] mt-[75px]" />
      </div>
      <div className="flex h-[981px] items-start">
        <CalendarsDesktop />
        <TodoMobile />
        <DailyMobile />
        <WeeklyMobile />
        <FiltersMobile />
      </div>
      <div className="flex items-start">
        <div className="flex flex-col">
          <ChartsDesktop />
          <Note />
        </div>
        <ChartsMobile />
      </div>
    </main>
  );
}
